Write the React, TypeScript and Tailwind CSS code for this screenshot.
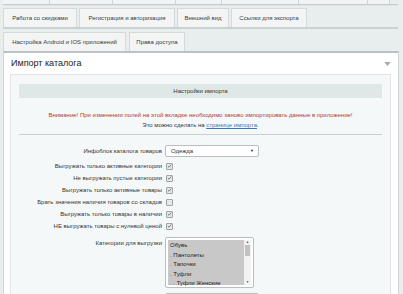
const topTabs = [47, 63, 63, 46, 77, 69, 22]
const secondTabs = [
  { label: 'Работа со скидками', w: 74 },
  { label: 'Регистрация и авторизация', w: 96 },
  { label: 'Внешний вид', w: 52 },
  { label: 'Ссылки для экспорта', w: 76 },
]
const thirdTabs = [
  { label: 'Настройка Android и IOS приложений', w: 123 },
  { label: 'Права доступа', w: 56 },
]

const checks = [
  { label: 'Выгружать только активные категории', on: true },
  { label: 'Не выгружать пустые категории', on: true },
  { label: 'Выгружать только активные товары', on: true },
  { label: 'Брать значения наличия товаров со складов', on: false },
  { label: 'Выгружать только товары в наличии', on: true },
  { label: 'НЕ выгружать товары с нулевой ценой', on: true },
]

const categories = ['Обувь', '. Пантолеты', '. Тапочки', '. Туфли', '. . Туфли Женские']

function Tab({ label, w }: { label: string; w: number }) {
  return (
    <div
      className="h-[19px] flex items-center justify-center bg-[#f3f5f5] border border-b-0 border-[#d3dadb] rounded-t-[1px] text-[6px] text-[#3a3a3a]"
      style={{ width: w }}
    >
      {label}
    </div>
  )
}

function Checkbox({ on }: { on: boolean }) {
  return (
    <div className="w-[7px] h-[7px] border border-[#9ea4a6] rounded-[1px] bg-[#e6e9ea] flex items-center justify-center">
      {on && (
        <svg viewBox="0 0 8 8" className="w-[6px] h-[6px]">
          <path d="M1.3 4.2 L3.2 6 L6.8 1.8" fill="none" stroke="#555" strokeWidth={1.2} />
        </svg>
      )}
    </div>
  )
}

export default function App() {
  return (
    <div className="w-[403px] h-[294px] overflow-hidden bg-[#e8edee] font-['Liberation_Sans',Arial,sans-serif]">
      {/* cut-off first row of tabs */}
      <div className="flex px-[3px] h-[4px]">
        {topTabs.map((w, i) => (
          <div key={i} className="h-full border-r border-[#d0d7d8] bg-[#f1f4f4]" style={{ width: w }} />
        ))}
      </div>
      <div className="mx-[3px] mr-[5px] h-[2px] bg-[#c4cccd] border-b border-[#dfe5e6]" />

      <div className="flex gap-[2px] px-[3px] mt-[2px]">
        {secondTabs.map((t) => (
          <Tab key={t.label} {...t} />
        ))}
      </div>
      <div className="mx-[3px] mr-[5px] h-[2px] bg-[#c9d1d2]" />

      <div className="flex gap-[3px] px-[3px] mt-[3px]">
        {thirdTabs.map((t) => (
          <Tab key={t.label} {...t} />
        ))}
      </div>

      {/* panel */}
      <div className="ml-[3px] mr-[4px] bg-white border border-[#cfd6d7] border-t-2 border-t-[#b9c2c4] h-[260px]">
        <div className="flex items-center justify-between pl-[7px] pr-[7px] h-[21px]">
          <span className="text-[9px] text-[#222]">Импорт каталога</span>
          <svg viewBox="0 0 8 5" className="w-[7px] h-[4px]">
            <path d="M0 0 H8 L4 5 Z" fill="#a3abad" />
          </svg>
        </div>

        <div className="ml-[6px] mr-[7px] bg-[#f5f8f8] border border-[#e1e7e7] px-[8px] pt-[9px] h-[240px]">
          <div className="h-[14px] bg-[#e0e7e7] flex items-center justify-center text-[6px] text-[#333]">
            Настройки импорта
          </div>

          <div className="mt-[12px] text-center text-[6px] leading-[10px] text-[#b03a36]">
            Внимание! При изменении полей на этой вкладке необходимо заново импортировать данные в приложение!
          </div>
          <div className="text-center text-[6px] leading-[10px] text-[#333]">
            Это можно сделать на{' '}
            <span className="text-[#3b78b8] underline">странице импорта</span>.
          </div>
          <div className="mt-[4px] h-px bg-[#c8d0d1]" />

          <div className="mt-[10px] grid grid-cols-[143px_1fr] gap-x-[3px] text-[6px] text-[#333]">
            <div className="h-[12px] flex items-center justify-end">Инфоблок каталога товаров</div>
            <div className="h-[12px] w-[94px] bg-white border border-[#b9bfc1] rounded-[2px] flex items-center justify-between pl-[5px] pr-[4px]">
              <span>Одежда</span>
              <span className="text-[4px] text-[#222]">▼</span>
            </div>

            <div className="col-span-2 h-[3px]" />

            {checks.map((c) => (
              <div key={c.label} className="contents">
                <div className="h-[12px] flex items-center justify-end">{c.label}</div>
                <div className="h-[12px] flex items-center pl-[1px]">
                  <Checkbox on={c.on} />
                </div>
              </div>
            ))}

            <div className="col-span-2 h-[5px]" />

            <div className="flex justify-end pt-[2px]">Категории для выгрузки</div>
            <div className="w-[89px] h-[51px] border border-[#b9bfc1] rounded-[2px] bg-white p-[2px] flex">
              <div className="flex-1 bg-[#c8c8c8] pl-[2px] pt-[1px] text-[6px] leading-[9.5px] text-[#222]">
                {categories.map((c) => (
                  <div key={c}>{c}</div>
                ))}
              </div>
              <div className="w-[7px] flex flex-col items-center bg-[#f2f2f2]">
                <span className="text-[3px] leading-[5px] text-[#333]">▲</span>
                <div className="w-[5px] h-[11px] bg-[#c1c1c1]" />
                <div className="flex-1" />
                <span className="text-[3px] leading-[5px] text-[#333]">▼</span>
              </div>
            </div>

            <div className="col-span-2 h-[5px]" />
            <div className="h-[12px] flex items-center justify-end">Цвет товаров</div>
            <div className="h-[12px] w-[94px] bg-white border border-[#b9bfc1] rounded-[2px]" />
          </div>
        </div>
      </div>
    </div>
  )
}
